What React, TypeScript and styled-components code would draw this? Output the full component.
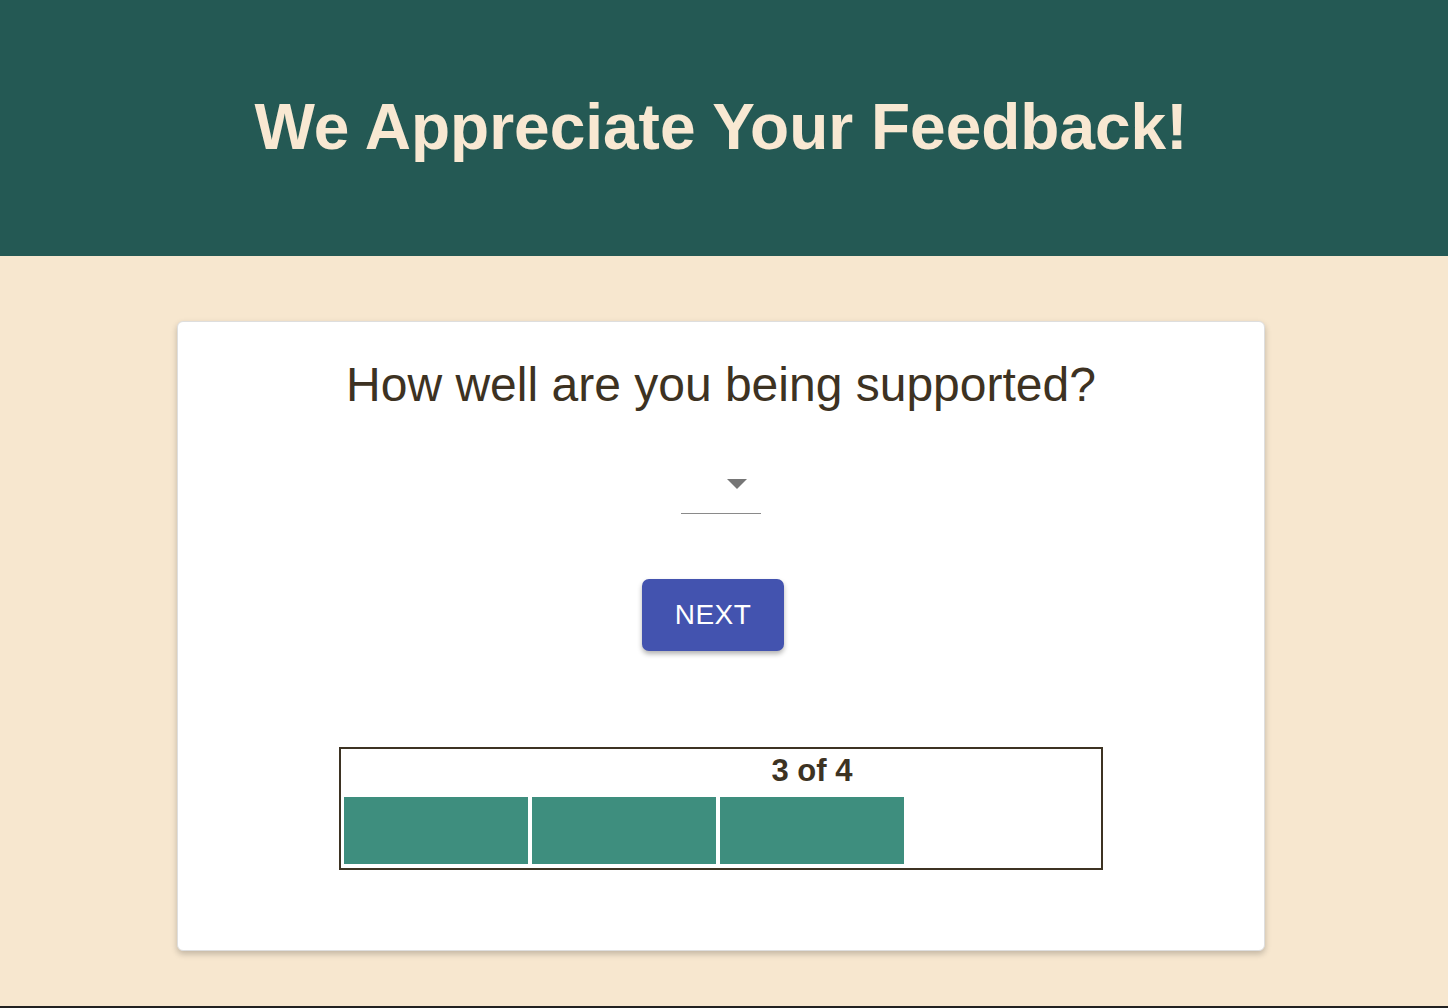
import styled, { createGlobalStyle } from 'styled-components';

const GlobalStyle = createGlobalStyle`
  html, body {
    margin: 0;
    padding: 0;
    background-color: #222222;
    font-family: "Liberation Sans", Helvetica, Arial, sans-serif;
  }
`;

const Page = styled.div`
  display: flex;
  flex-direction: column;
  height: 1006px;
  background-color: #f7e7cf;
`;

const Header = styled.header`
  height: 256px;
  display: flex;
  align-items: center;
  justify-content: center;
  padding-right: 6px;
  background-color: #245954;
`;

const Title = styled.h1`
  margin: 0 0 3px;
  font-size: 64px;
  font-weight: 700;
  color: #f8e8d2;
`;

const Main = styled.main`
  display: flex;
  justify-content: center;
  padding-top: 65px;
  padding-right: 6px;
`;

const Card = styled.section`
  width: 1088px;
  height: 630px;
  box-sizing: border-box;
  padding: 36px 0 0;
  display: flex;
  flex-direction: column;
  align-items: center;
  background-color: #ffffff;
  border: 1px solid #dedede;
  border-radius: 6px;
  box-shadow: 0 3px 6px rgba(0, 0, 0, 0.22);
`;

const Question = styled.h2`
  margin: 0;
  font-size: 48px;
  line-height: 54px;
  font-weight: 400;
  color: #3d3222;
`;

const Select = styled.div`
  margin-top: 55px;
  width: 80px;
  height: 47px;
  box-sizing: border-box;
  display: flex;
  align-items: center;
  justify-content: flex-end;
  padding-right: 14px;
  padding-bottom: 12px;
  border-bottom: 1px solid #8a8a8a;
  cursor: pointer;
`;

const Button = styled.button`
  margin: 65px 16px 0 0;
  width: 142px;
  height: 72px;
  border: none;
  border-radius: 7px;
  background-color: #4353af;
  color: #ffffff;
  font-family: inherit;
  font-size: 28px;
  letter-spacing: 0.5px;
  box-shadow: 0 3px 5px rgba(0, 0, 0, 0.3);
  cursor: pointer;
`;

const Progress = styled.div`
  margin-top: 96px;
  width: 764px;
  height: 123px;
  box-sizing: border-box;
  border: 2px solid #3d3323;
  padding: 3px 3px 4px;
  display: grid;
  grid-template-columns: repeat(4, 184px);
  grid-template-rows: 37px 67px;
  column-gap: 4px;
  row-gap: 8px;
`;

const StepLabel = styled.div<{ $step: number }>`
  grid-row: 1;
  grid-column: ${p => p.$step};
  text-align: center;
  font-size: 31px;
  line-height: 37px;
  font-weight: 700;
  color: #3d3323;
`;

const Segment = styled.div<{ $done: boolean }>`
  grid-row: 2;
  background-color: ${p => (p.$done ? '#3e8e7e' : 'transparent')};
`;

const Footer = styled.div`
  flex: 1;
`;

const TOTAL = 4;
const CURRENT = 3;

function App() {
  return (
    <>
      <GlobalStyle />
      <Page>
        <Header>
          <Title>We Appreciate Your Feedback!</Title>
        </Header>
        <Main>
          <Card>
            <Question>How well are you being supported?</Question>
            <Select>
              <svg width="20" height="10" viewBox="0 0 20 10">
                <path d="M0 0 L20 0 L10 10 Z" fill="#767676" />
              </svg>
            </Select>
            <Button>NEXT</Button>
            <Progress>
              <StepLabel $step={CURRENT}>
                {CURRENT} of {TOTAL}
              </StepLabel>
              {Array.from({ length: TOTAL }, (_, i) => (
                <Segment key={i} $done={i < CURRENT} />
              ))}
            </Progress>
          </Card>
        </Main>
        <Footer />
      </Page>
    </>
  );
}

export default App;
